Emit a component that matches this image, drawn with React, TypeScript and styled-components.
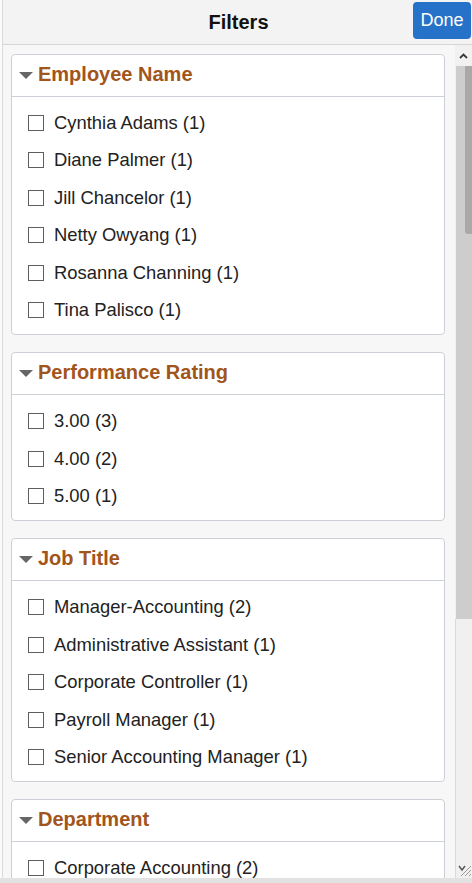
import React from "react";
import styled, { createGlobalStyle } from "styled-components";

const Global = createGlobalStyle`
  html, body { margin: 0; padding: 0; background: #ffffff; }
  body { font-family: "Liberation Sans", Arial, sans-serif; }
  * { box-sizing: border-box; }
`;

const Page = styled.div`
  width: 472px;
  height: 883px;
  padding-left: 2px;
  background: #fbfbfb;
  display: flex;
  flex-direction: column;
  overflow: hidden;
`;

const Frame = styled.div`
  flex: 1;
  display: flex;
  flex-direction: column;
  border-left: 1px solid #dadada;
  min-height: 0;
`;

const Header = styled.header`
  position: relative;
  height: 45px;
  flex: none;
  background: #f3f3f3;
  border-bottom: 1px solid #d3d6db;
  display: flex;
  align-items: center;
  justify-content: center;
`;

const Title = styled.h1`
  margin: 0;
  font-size: 20px;
  font-weight: bold;
  color: #111;
  padding-left: 2px;
`;

const DoneButton = styled.button`
  position: absolute;
  right: 1px;
  top: 2px;
  width: 58px;
  height: 37px;
  border: none;
  border-radius: 4px;
  background: #2672c8;
  color: #ffffff;
  font-family: "Liberation Sans", Arial, sans-serif;
  font-size: 18px;
  padding: 0;
`;

const Body = styled.div`
  flex: 1;
  display: flex;
  min-height: 0;
`;

const Content = styled.div`
  flex: 1;
  background: #f7f7f7;
  padding: 9px 10px 0 8px;
  overflow: hidden;
  display: flex;
  flex-direction: column;
  gap: 17.4px;
`;

const Card = styled.section`
  flex: none;
  background: #ffffff;
  border: 1px solid #cdd1d7;
  border-radius: 4px;
`;

const CardHeader = styled.div`
  height: 42px;
  border-bottom: 1px solid #cdd1d7;
  display: flex;
  align-items: center;
  padding-left: 7px;
  padding-bottom: 2px;
  gap: 5px;
`;

const Caret = styled.span`
  width: 0;
  height: 0;
  border-left: 7px solid transparent;
  border-right: 7px solid transparent;
  border-top: 7px solid #666666;
  margin-top: 2px;
`;

const CardTitle = styled.h2`
  margin: 0;
  font-size: 20px;
  font-weight: bold;
  color: #a2551b;
`;

const List = styled.ul`
  list-style: none;
  margin: 0;
  padding: 7px 0 5px 16px;
`;

const Row = styled.li`
  height: 37.5px;
  display: flex;
  align-items: center;
  gap: 10px;
  font-size: 18.4px;
  color: #222222;
`;

const Box = styled.span`
  width: 16px;
  height: 16px;
  border: 1.5px solid #5e5e5e;
  background: #ffffff;
  flex: none;
`;

const Scroll = styled.div`
  width: 17px;
  flex: none;
  display: flex;
  flex-direction: column;
  background: #f0f0f0;
`;

const ArrowCell = styled.div`
  height: 21px;
  flex: none;
  display: flex;
  align-items: center;
  justify-content: center;
  background: #f1f1f1;
`;

const Track = styled.div`
  position: relative;
  height: 553px;
  flex: none;
  background: #cdcdcd;
  margin-left: 1px;
`;

const Thumb = styled.div`
  position: absolute;
  right: 0;
  top: 0;
  width: 7px;
  height: 168px;
  background: #a9a9a9;
  border-bottom-left-radius: 3px;
`;

const Lower = styled.div`
  flex: 1;
  border-left: 1px solid #d9d9d9;
  display: flex;
  align-items: flex-end;
  justify-content: flex-end;
  padding-bottom: 1px;
`;

const BottomBar = styled.div`
  height: 5px;
  flex: none;
  background: #e2e2e2;
  margin-left: -2px;
`;

type Section = { title: string; items: string[] };

const sections: Section[] = [
  {
    title: "Employee Name",
    items: [
      "Cynthia Adams (1)",
      "Diane Palmer (1)",
      "Jill Chancelor (1)",
      "Netty Owyang (1)",
      "Rosanna Channing (1)",
      "Tina Palisco (1)",
    ],
  },
  { title: "Performance Rating", items: ["3.00 (3)", "4.00 (2)", "5.00 (1)"] },
  {
    title: "Job Title",
    items: [
      "Manager-Accounting (2)",
      "Administrative Assistant (1)",
      "Corporate Controller (1)",
      "Payroll Manager (1)",
      "Senior Accounting Manager (1)",
    ],
  },
  { title: "Department", items: ["Corporate Accounting (2)"] },
];

export default function App() {
  return (
    <>
      <Global />
      <Page>
        <Frame>
          <Header>
            <Title>Filters</Title>
            <DoneButton>Done</DoneButton>
          </Header>
          <Body>
            <Content>
              {sections.map((s) => (
                <Card key={s.title}>
                  <CardHeader>
                    <Caret />
                    <CardTitle>{s.title}</CardTitle>
                  </CardHeader>
                  <List>
                    {s.items.map((it) => (
                      <Row key={it}>
                        <Box />
                        {it}
                      </Row>
                    ))}
                  </List>
                </Card>
              ))}
            </Content>
            <Scroll>
              <ArrowCell>
                <svg width="9" height="6" viewBox="0 0 9 6">
                  <path d="M1 5 L4.5 1.5 L8 5" stroke="#3a3a3a" strokeWidth="1.8" fill="none" />
                </svg>
              </ArrowCell>
              <Track>
                <Thumb />
              </Track>
              <Lower>
                <svg width="14" height="14" viewBox="0 0 14 14">
                  <path d="M1 3 L4 7 L7 3" stroke="#555" strokeWidth="1.4" fill="none" />
                  <path d="M3 13 L13 3 M7 13 L13 7 M11 13 L13 11" stroke="#9a9a9a" strokeWidth="1" />
                </svg>
              </Lower>
            </Scroll>
          </Body>
        </Frame>
        <BottomBar />
      </Page>
    </>
  );
}
